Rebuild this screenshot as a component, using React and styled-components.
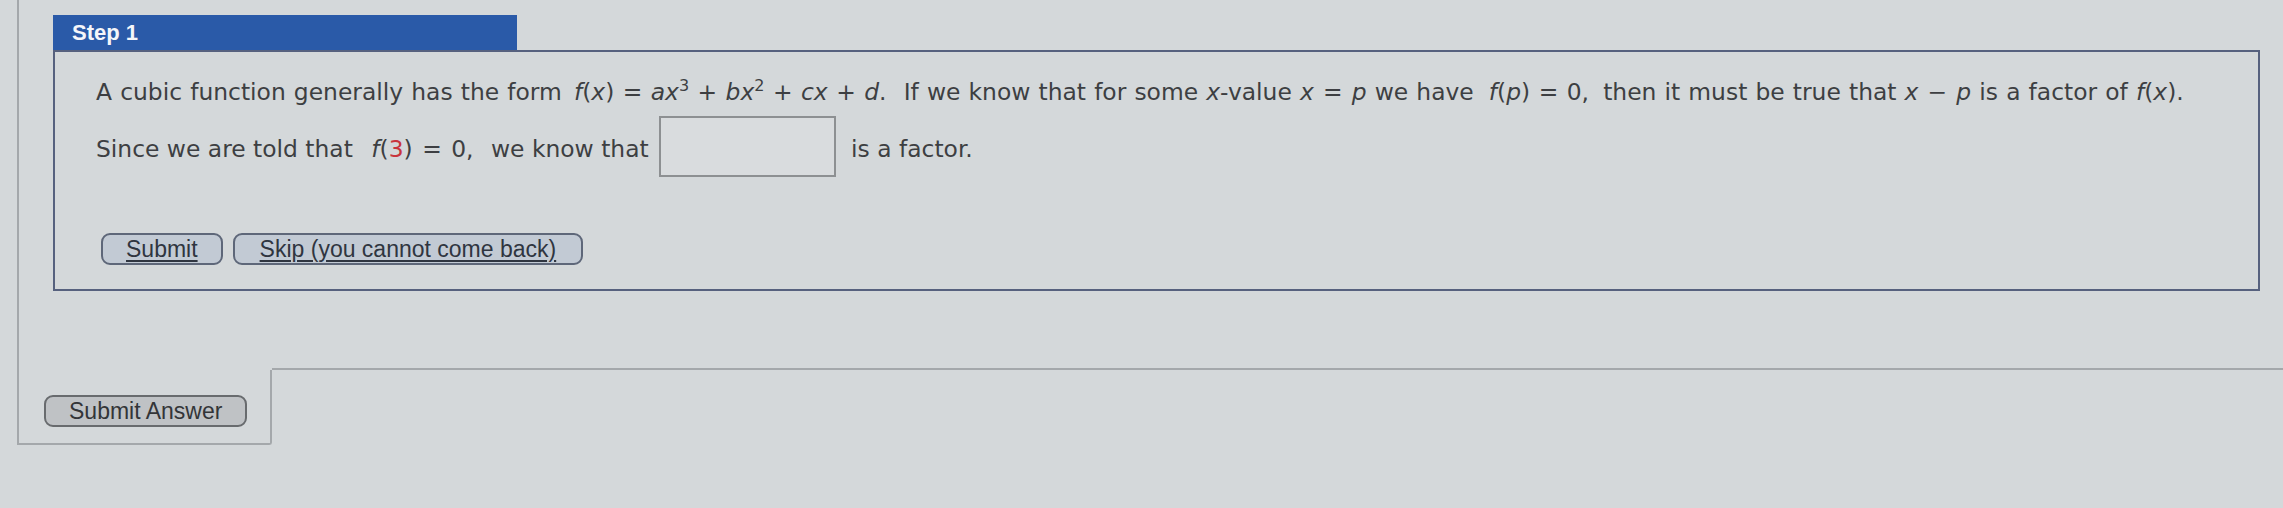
import React from 'react';
import styled, { createGlobalStyle } from 'styled-components';

const GlobalStyle = createGlobalStyle`
  html, body {
    margin: 0;
    padding: 0;
    background: #d4d8da;
  }
  body {
    width: 2283px;
    height: 508px;
    overflow: hidden;
    font-family: "DejaVu Sans", Verdana, sans-serif;
    color: #3d3f42;
  }
`;

const Page = styled.div`
  padding-left: 17px;
  height: 508px;
  box-sizing: border-box;
`;

const Frame = styled.div`
  border-left: 2px solid #a4a8ab;
  padding-top: 15px;
  display: flex;
  flex-direction: column;
`;

const Step = styled.section`
  margin-left: 34px;
  margin-right: 23px;
`;

const Tab = styled.div`
  width: 464px;
  height: 35px;
  box-sizing: border-box;
  background: #2a5aa8;
  color: #f4f6fa;
  font-family: "Liberation Sans", Arial, sans-serif;
  font-weight: bold;
  font-size: 22px;
  padding-left: 19px;
  display: flex;
  align-items: center;
`;

const Box = styled.div`
  border: 2px solid #56617e;
  height: 241px;
  box-sizing: border-box;
  padding: 26px 0 0 41px;
`;

const Line = styled.p`
  margin: 0 0 ${p => p.$mb || 0}px;
  font-size: 23.4px;
  line-height: 28px;
  white-space: nowrap;
  word-spacing: ${p => p.$ws || 0}px;
`;

const M = styled.span`
  padding: 0 ${p => p.$r ?? 4}px 0 ${p => p.$l ?? 4}px;
  word-spacing: 0;
`;

const Op = styled.span`
  padding: 0 ${p => p.$pad ?? 1}px;
`;

const I = styled.i`
  font-style: italic;
`;

const Sup = styled.sup`
  font-size: 16px;
  line-height: 0;
  vertical-align: 9px;
`;

const Red = styled.span`
  color: #c8343c;
`;

const Blank = styled.span`
  display: inline-block;
  width: 177px;
  height: 61px;
  box-sizing: border-box;
  border: 2px solid #8d9092;
  background: #d9dcde;
  vertical-align: -20px;
  margin: 0 15px 0 3px;
`;

const Buttons = styled.div`
  display: flex;
  gap: 10px;
  margin-top: 56px;
  margin-left: 5px;
`;

const Button = styled.button`
  font-family: "Liberation Sans", Arial, sans-serif;
  font-size: 23px;
  height: 32px;
  padding: 0 ${p => p.$px || 24}px;
  border-radius: 9px;
  border: 2px solid ${p => (p.$gray ? '#686b6e' : '#5e6779')};
  background: ${p => (p.$gray ? '#bfc2c5' : '#c2cad4')};
  color: ${p => (p.$gray ? '#333538' : '#2f3540')};
  text-decoration: ${p => (p.$gray ? 'none' : 'underline')};
  text-underline-offset: 3px;
  cursor: pointer;
`;

const Footer = styled.div`
  display: flex;
  margin-top: 79px;
`;

const SubmitCell = styled.div`
  width: 253px;
  height: 75px;
  box-sizing: border-box;
  border-right: 2px solid #a4a8ab;
  border-bottom: 2px solid #a4a8ab;
  border-bottom-right-radius: 3px;
  padding: 25px 0 0 25px;
`;

const Rest = styled.div`
  flex: 1;
  border-top: 2px solid #a4a8ab;
  margin-top: -2px;
`;

export default function App() {
  return (
    <>
      <GlobalStyle />
      <Page>
        <Frame>
          <Step>
            <Tab>Step 1</Tab>
            <Box>
              <Line $mb={10} $ws={0.7}>
                A cubic function generally has the form{' '}
                <M $l={4} $r={9}>
                  <I>f</I>(<I>x</I>) <Op>=</Op> <I>a</I><I>x</I><Sup>3</Sup> <Op>+</Op> <I>b</I><I>x</I><Sup>2</Sup> <Op>+</Op> <I>c</I><I>x</I> <Op>+</Op> <I>d</I>.
                </M>{' '}
                If we know that for some <I>x</I>-value <I>x</I> <Op>=</Op> <I>p</I> we have{' '}
                <M $l={7} $r={6}>
                  <I>f</I>(<I>p</I>) <Op>=</Op> 0,
                </M>{' '}
                then it must be true that <I>x</I> <Op>−</Op> <I>p</I> is a factor of <I>f</I>(<I>x</I>).
              </Line>
              <Line>
                Since we are told that{' '}
                <M $l={11} $r={10}>
                  <I>f</I>(<Red>3</Red>) <Op $pad={2}>=</Op> 0,
                </M>{' '}
                we know that <Blank />
                is a factor.
              </Line>
              <Buttons>
                <Button $px={23}>Submit</Button>
                <Button $px={25}>Skip (you cannot come back)</Button>
              </Buttons>
            </Box>
          </Step>
          <Footer>
            <SubmitCell>
              <Button $gray $px={23}>Submit Answer</Button>
            </SubmitCell>
            <Rest />
          </Footer>
        </Frame>
      </Page>
    </>
  );
}
